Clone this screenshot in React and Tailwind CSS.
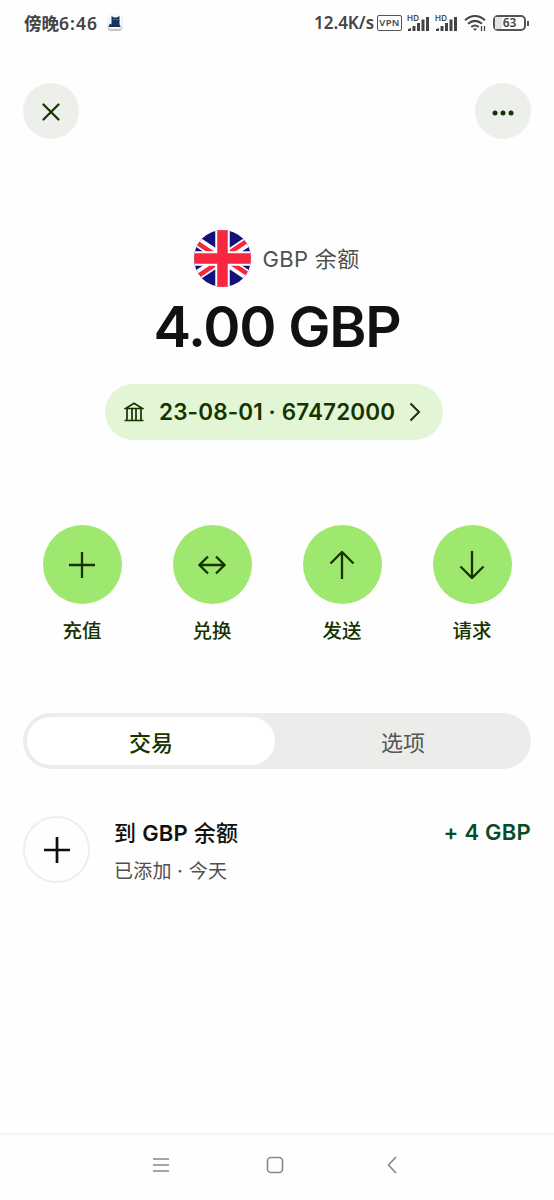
const actions = [
  { label: '充值', path: 'M14 1v26M1 14h26' },
  { label: '兑换', path: 'M1 14h26M10 5.500 1.500 14l8.500 8.500M18 5.500l8.500 8.500-8.500 8.500' },
  { label: '发送', path: 'M14 28V1M2.500 12.500 14 1l11.500 11.500' },
  { label: '请求', path: 'M14 0v27M2.500 15.500 14 27l11.500-11.500' },
]

function Signal() {
  return (
    <svg width="22" height="18" viewBox="0 0 22 18" fill="#444" className="shrink-0">
      <text x="0" y="7" fontSize="8" fontWeight="600" fontFamily="Inter, sans-serif" textLength="12">HD</text>
      <path d="M1 17v-2l3-1v3zM5.500 17v-5H8.500v5zM10 17V9h3v8zM14.500 17V5.500h3V17zM19 17V3h3v14z" />
    </svg>
  )
}

function StatusBar() {
  return (
    <div className="flex h-[46px] items-center pl-6 pr-[25px] font-['Noto_Sans','Noto_Sans_CJK_SC',sans-serif] text-[#444]">
      <span className="whitespace-nowrap text-[17.500px] font-semibold leading-6">
        傍晚<span className="tracking-[1.050px]">6:46</span>
      </span>
      <svg width="18" height="18" viewBox="0 0 18 18" className="ml-2">
        <rect x="1.500" y="2" width="15" height="15" rx="4" fill="#c4c4c4" />
        <rect x="1.500" y="0" width="15" height="15" rx="4" fill="#f8f8f8" />
        <path d="M2.500 12.500 4 9.500l1.500 1V2L8 3.500h3L13.500 2v8.500l1 1.500v1h-12z" fill="#17365f" />
        <path d="M7.500 5.500h1M10.500 5.500h1" stroke="#9fb5cf" />
      </svg>

      <div className="ml-auto flex items-center">
        <span className="w-[60px] whitespace-nowrap text-[17px] font-semibold leading-6">12.4K/s</span>
        <span className="ml-[3px] flex h-4 w-[25px] items-center justify-center rounded-[2px] border-[1.500px] border-[#555] text-[9.500px] font-semibold leading-none tracking-[0.3px]">
          VPN
        </span>
        <div className="ml-[5px] flex gap-1.5">
          <Signal />
          <Signal />
        </div>
        <svg width="24" height="18" viewBox="0 0 24 18" fill="none" stroke="#444" strokeWidth="2" className="ml-[7px]">
          <path d="M1 6.200q10-8.400 20 0M4 9.700q7-5.600 14 0M7.200 13q3.800-3 7.600 0" />
          <path d="M8.800 14.500h4.400L11 17z" fill="#444" stroke="none" />
          <path d="M17.500 12v5M20.500 12v5" strokeWidth="1.300" />
        </svg>
        <div className="relative ml-[5px] flex h-4 w-[33px] items-center justify-center rounded-[5px] border-2 border-[#555] text-[12px] font-semibold leading-none">
          <span className="absolute inset-y-0 left-0 w-[7px] bg-[#e4e4e4]" />
          <span className="relative">63</span>
        </div>
        <span className="ml-px h-[5px] w-0.5 bg-[#555]" />
      </div>
    </div>
  )
}

function Flag() {
  return (
    <svg width="57" height="57" viewBox="-28.500 -28.500 57 57">
      <clipPath id="round">
        <circle r="28.500" />
      </clipPath>
      <g clipPath="url(#round)">
        <path d="M-29-29h58v58h-58z" fill="#12127d" />
        <path d="M-36-24 36 24M36-24-36 24" stroke="#fff" strokeWidth="10" />
        <path d="M-36-22.800 0 1.200M36 22.800 0-1.200M36-25.200 0-1.200M-36 25.200 0 1.200" stroke="#f5283f" strokeWidth="4.600" />
        <path d="M0-29v58M-29 0h58" stroke="#fff" strokeWidth="14.500" />
        <path d="M0-29v58M-29 0h58" stroke="#f5283f" strokeWidth="10.500" />
      </g>
    </svg>
  )
}

function Balance() {
  return (
    <section className="mt-[91px] flex flex-col items-center">
      <div className="flex h-[57px] items-center gap-[11px]">
        <Flag />
        <span className="whitespace-nowrap text-[22px] leading-8 tracking-[0.350px] text-[#505050]">GBP 余额</span>
      </div>
      <h1 className="mt-[7px] whitespace-nowrap text-[56.500px] font-semibold leading-[66px] tracking-[-1.250px] text-[#111]">4.00 GBP</h1>
      <button className="mr-1.5 mt-6 flex h-14 w-[338px] items-center rounded-full bg-[#e2f6d5] pl-[19px] text-[#163300]">
        <svg width="20" height="20" viewBox="0 0 20 20" fill="none" stroke="currentColor" strokeWidth="1.700">
          <path d="M.500 18.500h19M1.500 6.500h17L10 1.200 1.500 6.500zM3 7v11M8 7v11M12 7v11M17 7v11" />
        </svg>
        <span className="ml-[15px] w-[238px] whitespace-nowrap text-left text-[22.500px] font-semibold leading-8 tracking-[0.120px]">
          23-08-01 · 67472000
        </span>
        <svg width="12" height="20" viewBox="0 0 12 20" fill="none" stroke="currentColor" strokeWidth="2" className="ml-3">
          <path d="m1.500 1.500 8.500 8.500-8.500 8.500" />
        </svg>
      </button>
    </section>
  )
}

export default function App() {
  return (
    <div className="flex h-[1200px] w-[554px] flex-col overflow-hidden bg-[#fefefe] font-['Inter','Noto_Sans_CJK_SC',sans-serif]">
      <StatusBar />

      <header className="mt-[37px] flex justify-between px-[23px]">
        <button className="flex size-14 items-center justify-center rounded-full bg-[#edefeb]">
          <svg width="18" height="18" viewBox="0 0 18 18" fill="none" stroke="#163300" strokeWidth="2.200" className="mt-px">
            <path d="m1.500 1.500 15 15M16.500 1.500l-15 15" strokeLinecap="round" />
          </svg>
        </button>
        <button className="flex size-14 items-center justify-center rounded-full bg-[#edefeb]">
          <svg width="22" height="6" viewBox="0 0 22 6" fill="#163300" className="mt-[3px]">
            <circle cx="3" cy="3" r="2.500" />
            <circle cx="11" cy="3" r="2.500" />
            <circle cx="19" cy="3" r="2.500" />
          </svg>
        </button>
      </header>

      <Balance />

      <div className="mt-[85px] flex justify-between px-[42.500px]">
        {actions.map(({ label, path }) => (
          <div key={label} className="flex flex-col items-center">
            <button className="flex size-[79px] items-center justify-center rounded-full bg-[#9fe870]">
              <svg width="28" height="28" viewBox="0 0 28 28" fill="none" stroke="#163300" strokeWidth="2.300">
                <path d={path} />
              </svg>
            </button>
            <span className="mt-3 text-[19.500px] font-medium leading-[30px] text-[#163300]">{label}</span>
          </div>
        ))}
      </div>

      <div className="mx-[23px] mt-[67px] flex h-14 rounded-full bg-[#ecedea] p-1 text-[22px]">
        <button className="w-[248px] rounded-full bg-white pt-1 font-medium text-[#163300]">交易</button>
        <button className="flex-1 pl-1 pt-1 text-[#555]">选项</button>
      </div>

      <div className="mx-[23px] mt-[47px] flex">
        <div className="flex size-[67px] items-center justify-center rounded-full border-2 border-[#eeefed]">
          <svg width="28" height="28" viewBox="0 0 28 28" stroke="#0e0f0c" strokeWidth="2.700">
            <path d="M14 1v26M1 14h26" />
          </svg>
        </div>
        <div className="ml-6">
          <p className="mt-px text-[22px] font-medium leading-8 tracking-[0.150px] text-[#111]">
            到 <span className="font-semibold">GBP</span> 余额
          </p>
          <p className="mt-[7px] text-[19px] leading-8 tracking-[0.250px] text-[#505050]">已添加 · 今天</p>
        </div>
        <span className="ml-auto text-[22px] font-semibold leading-8 tracking-[0.250px] text-[#054d28]">+ 4 GBP</span>
      </div>

      <nav className="mt-auto flex h-[67px] items-center border-t-2 border-[#f4f4f4] pb-1.5 pl-[153px]">
        <svg width="16" height="18" viewBox="0 0 16 18" stroke="#888" strokeWidth="1.600">
          <path d="M0 3h16M0 9h16M0 15h16" />
        </svg>
        <svg width="18" height="18" viewBox="0 0 18 18" fill="none" stroke="#888" strokeWidth="1.600" className="ml-[97px]">
          <rect x="1.500" y="1.500" width="15" height="15" rx="3.500" />
        </svg>
        <svg width="10" height="18" viewBox="0 0 10 18" fill="none" stroke="#888" strokeWidth="1.600" className="ml-[103px]">
          <path d="M9 1 1.500 9 9 17" />
        </svg>
      </nav>
    </div>
  )
}
